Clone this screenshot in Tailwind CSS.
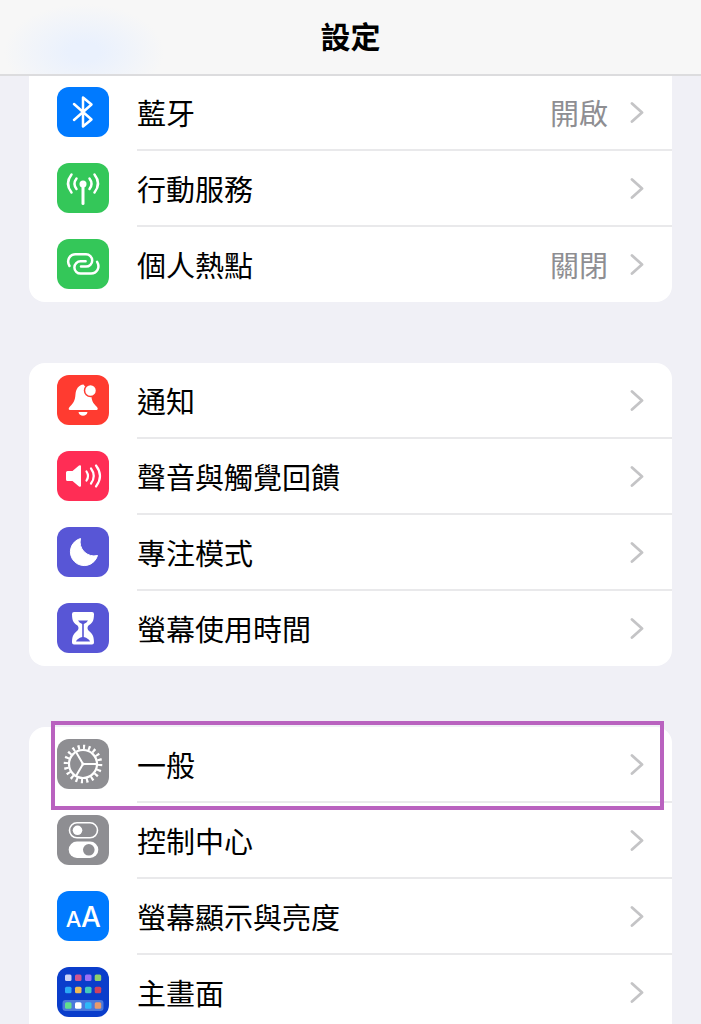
<!DOCTYPE html>
<html lang="zh-Hant">
<head>
  <meta charset="UTF-8" />
  <meta name="viewport" content="width=device-width, initial-scale=1.0" />
  <title>設定</title>
  <script src="https://cdn.jsdelivr.net/npm/@tailwindcss/browser@4"></script>
</head>
<body class="h-screen flex flex-col overflow-hidden bg-[#f0f0f6] text-black font-['Noto_Sans_CJK_TC',sans-serif]">
  <!-- Shared chevron -->
  <svg class="hidden">
    <symbol id="chevron" viewBox="0 0 14 22">
      <path d="M2 2.5L12 11.5L2 20.5" fill="none" stroke="#c4c4c6" stroke-width="2.8" stroke-linecap="round" stroke-linejoin="round" />
    </symbol>
  </svg>

  <header class="relative z-10 h-[76px] -mb-px shrink-0 flex items-center justify-center pb-1 border-b-2 border-[#dcdcde] bg-[#f7f7f7] bg-[radial-gradient(ellipse_80px_48px_at_84px_52px,#eaf1fd_20%,transparent)]">
    <h1 class="text-[30px] leading-10 font-bold">設定</h1>
  </header>

  <main class="flex-1 overflow-y-auto [scrollbar-width:none] flex flex-col gap-[61px] px-[29px]">
    <!-- Connectivity -->
    <ul class="shrink-0 bg-white rounded-b-2xl">
      <li>
        <a href="#bluetooth" class="flex items-start gap-7 pl-7">
          <svg class="w-[52px] h-[50px] mt-3 shrink-0 rounded-xl bg-[#007aff]" viewBox="0 0 52 50" fill="none" stroke="#fff" stroke-width="2.500" stroke-linejoin="round" stroke-linecap="round">
            <path d="M17 17L34.500 32.500L26 39.500V10.500L34.500 17.500L17 33" />
          </svg>
          <div class="flex-1 h-[76px] flex items-center border-b-2 border-[#e9e9eb] pr-7">
            <span class="flex-1 text-[29px] leading-10">藍牙</span>
            <span class="text-[29px] leading-10 text-[#8e8e92] mr-[22px]">開啟</span>
            <svg class="w-3.5 h-[22px]"><use href="#chevron" /></svg>
          </div>
        </a>
      </li>
      <li>
        <a href="#cellular" class="flex items-start gap-7 pl-7">
          <svg class="w-[52px] h-[50px] mt-3 shrink-0 rounded-xl bg-[#34c759]" viewBox="0 0 52 50" fill="none" stroke="#fff" stroke-width="2.500" stroke-linecap="round">
            <circle cx="26" cy="21" r="3.500" fill="#fff" stroke="none" />
            <path d="M26 22V40.500" stroke-width="3" />
            <path d="M32.500 15.500Q36.500 20.800 32.500 26M19.500 15.500Q15.500 20.800 19.500 26" />
            <path d="M37.500 11.500Q44.500 20.500 37.500 29.500M14.500 11.500Q7.500 20.500 14.500 29.500" />
          </svg>
          <div class="flex-1 h-[76px] flex items-center border-b-2 border-[#e9e9eb] pr-7">
            <span class="flex-1 text-[29px] leading-10">行動服務</span>
            <svg class="w-3.5 h-[22px]"><use href="#chevron" /></svg>
          </div>
        </a>
      </li>
      <li>
        <a href="#hotspot" class="flex items-start gap-7 pl-7">
          <svg class="w-[52px] h-[50px] mt-3 shrink-0 rounded-xl bg-[#34c759]" viewBox="0 0 52 50" fill="none" stroke="#fff" stroke-width="2.500" stroke-linecap="round">
            <path id="loop" d="M12.500 27C9 21 13 15.200 18.500 15.200H29A6.200 6.200 0 0 1 29 27.600H24" />
            <use href="#loop" transform="rotate(180 26.300 24.900)" />
          </svg>
          <div class="flex-1 h-[75px] flex items-center pr-7 pb-0.5">
            <span class="flex-1 text-[29px] leading-10">個人熱點</span>
            <span class="text-[29px] leading-10 text-[#8e8e92] mr-[22px]">關閉</span>
            <svg class="w-3.5 h-[22px]"><use href="#chevron" /></svg>
          </div>
        </a>
      </li>
    </ul>

    <!-- Alerts and focus -->
    <ul class="shrink-0 bg-white rounded-2xl">
      <li>
        <a href="#notifications" class="flex items-start gap-7 pl-7">
          <svg class="w-[52px] h-[50px] mt-3 shrink-0 rounded-xl bg-[#ff3b30]" viewBox="0 0 52 50" fill="#fff">
            <path d="M26.500 9.500C21.500 10 19 14 18.500 19C18 26 16.500 28 13 31.500C11 33.500 11.500 35 13.500 35H39C41 35 41.500 33.500 39.500 31.500C36 28 34.700 26 34.200 20Z" />
            <path d="M21.500 37H30.500C30 42 22 42 21.500 37Z" />
            <circle cx="33.500" cy="15.500" r="6" stroke="#ff3b30" stroke-width="1.500" />
          </svg>
          <div class="flex-1 h-[76px] flex items-center border-b-2 border-[#e9e9eb] pr-7">
            <span class="flex-1 text-[29px] leading-10">通知</span>
            <svg class="w-3.5 h-[22px]"><use href="#chevron" /></svg>
          </div>
        </a>
      </li>
      <li>
        <a href="#sounds" class="flex items-start gap-7 pl-7">
          <svg class="w-[52px] h-[50px] mt-3 shrink-0 rounded-xl bg-[#ff2d55]" viewBox="0 0 52 50" fill="none" stroke="#fff" stroke-width="2.200" stroke-linecap="round">
            <path d="M10.500 20H15.500L22 14.500Q24 13.500 24 15.500V34.500Q24 36.500 22 35.500L15.500 30H10.500Q9 30 9 28.500V21.500Q9 20 10.500 20Z" fill="#fff" stroke="none" />
            <path d="M29.500 20.500Q32.500 25 29.500 29.500M34 17.500Q39.500 25 34 32.500M39 14.500Q47 25 39 35.500" />
          </svg>
          <div class="flex-1 h-[76px] flex items-center border-b-2 border-[#e9e9eb] pr-7">
            <span class="flex-1 text-[29px] leading-10">聲音與觸覺回饋</span>
            <svg class="w-3.5 h-[22px]"><use href="#chevron" /></svg>
          </div>
        </a>
      </li>
      <li>
        <a href="#focus" class="flex items-start gap-7 pl-7">
          <svg class="w-[52px] h-[50px] mt-3 shrink-0 rounded-xl bg-[#5856d6]" viewBox="0 0 52 50" fill="#fff">
            <path d="M23.500 11.500A13.800 13.800 0 1 0 40.500 28.500A14 14 0 0 1 23.500 11.500Z" stroke="#fff" stroke-linejoin="round" />
          </svg>
          <div class="flex-1 h-[76px] flex items-center border-b-2 border-[#e9e9eb] pr-7">
            <span class="flex-1 text-[29px] leading-10">專注模式</span>
            <svg class="w-3.5 h-[22px]"><use href="#chevron" /></svg>
          </div>
        </a>
      </li>
      <li>
        <a href="#screen-time" class="flex items-start gap-7 pl-7">
          <svg class="w-[52px] h-[50px] mt-3 shrink-0 rounded-xl bg-[#5856d6]" viewBox="0 0 52 50">
            <path d="M17 9H35Q37 9 37 11C37 19 34.500 20.500 31.500 22.500Q29.500 25 31.500 27.500C34.500 30 37 32 37 39.500Q37 41.500 35 41.500H17Q15 41.500 15 39.500C15 32 17.500 30 20.500 27.500Q22.500 25 20.500 22.500C17.500 20.500 15 19 15 11Q15 9 17 9Z" fill="#fff" />
            <path d="M21 17.500H31Q30 19.500 26.800 21V34Q32 35.500 33 38.500H19Q20 35.500 25.200 34V21Q22 19.500 21 17.500Z" fill="#5856d6" />
          </svg>
          <div class="flex-1 h-[75px] flex items-center pr-7 pb-0.5">
            <span class="flex-1 text-[29px] leading-10">螢幕使用時間</span>
            <svg class="w-3.5 h-[22px]"><use href="#chevron" /></svg>
          </div>
        </a>
      </li>
    </ul>

    <!-- Device -->
    <ul class="shrink-0 bg-white rounded-t-2xl">
      <li class="relative">
        <a href="#general" class="flex items-start gap-7 pl-7">
          <svg class="w-[52px] h-[50px] mt-3 shrink-0 rounded-xl bg-[#8e8e92]" viewBox="0 0 52 50" fill="none" stroke="#fff">
            <circle cx="26" cy="25" r="14" stroke-width="2.200" />
            <circle cx="26" cy="25" r="17" stroke-width="4.600" pathLength="80" stroke-dasharray="1.600 2.400" />
            <path d="M26 25H40M26 25L19 12.900M26 25L19 37.100" stroke-width="2" />
            <circle cx="26" cy="25" r="1.600" fill="#fff" stroke="none" />
          </svg>
          <div class="flex-1 h-[76px] flex items-center border-b-2 border-[#e9e9eb] pr-7">
            <span class="flex-1 text-[29px] leading-10">一般</span>
            <svg class="w-3.5 h-[22px]"><use href="#chevron" /></svg>
          </div>
        </a>
        <!-- Highlight frame -->
        <div class="absolute left-[22px] right-2 -top-1.5 -bottom-[7px] border-4 border-[#b962bf] pointer-events-none"></div>
      </li>
      <li>
        <a href="#control-center" class="flex items-start gap-7 pl-7">
          <svg class="w-[52px] h-[50px] mt-3 shrink-0 rounded-xl bg-[#8e8e92]" viewBox="0 0 52 50" fill="#fff">
            <rect x="12.500" y="7.800" width="28" height="15" rx="7.500" fill="none" stroke="#fff" stroke-width="1.600" />
            <circle cx="20.500" cy="15.300" r="4.800" />
            <rect x="11.700" y="26.500" width="29.600" height="16.500" rx="8.250" />
            <circle cx="31.800" cy="34.800" r="5.800" fill="#8e8e92" />
          </svg>
          <div class="flex-1 h-[76px] flex items-center border-b-2 border-[#e9e9eb] pr-7">
            <span class="flex-1 text-[29px] leading-10">控制中心</span>
            <svg class="w-3.5 h-[22px]"><use href="#chevron" /></svg>
          </div>
        </a>
      </li>
      <li>
        <a href="#display" class="flex items-start gap-7 pl-7">
          <svg class="w-[52px] h-[50px] mt-3 shrink-0 rounded-xl bg-[#007aff] font-['Inter',sans-serif] font-medium" viewBox="0 0 52 50" fill="#fff">
            <text x="16.500" y="36" font-size="22" text-anchor="middle">A</text>
            <text x="34" y="36" font-size="28" text-anchor="middle">A</text>
          </svg>
          <div class="flex-1 h-[76px] flex items-center border-b-2 border-[#e9e9eb] pr-7">
            <span class="flex-1 text-[29px] leading-10">螢幕顯示與亮度</span>
            <svg class="w-3.5 h-[22px]"><use href="#chevron" /></svg>
          </div>
        </a>
      </li>
      <li>
        <a href="#home-screen" class="flex items-start gap-7 pl-7">
          <svg class="w-[52px] h-[50px] mt-3 shrink-0 rounded-xl bg-[#0a3dcb]" viewBox="0 0 52 50">
            <rect x="5.500" y="33" width="41" height="11" rx="3" fill="#4a78dc" />
            <rect x="8" y="7.500" width="6.500" height="6.500" rx="1.500" fill="#ccd3f5" />
            <rect x="18" y="7.500" width="6.500" height="6.500" rx="1.500" fill="#d0568f" />
            <rect x="28" y="7.500" width="6.500" height="6.500" rx="1.500" fill="#9b70f5" />
            <rect x="37.700" y="7.500" width="6.500" height="6.500" rx="1.500" fill="#8fd06b" />
            <rect x="8" y="19.700" width="6.500" height="6.500" rx="1.500" fill="#2ba9f5" />
            <rect x="18" y="19.700" width="6.500" height="6.500" rx="1.500" fill="#eebb55" />
            <rect x="28" y="19.700" width="6.500" height="6.500" rx="1.500" fill="#42cbbd" />
            <rect x="37.700" y="19.700" width="6.500" height="6.500" rx="1.500" fill="#cf4260" />
            <rect x="8" y="35.300" width="6.500" height="6.500" rx="1.500" fill="#62df8c" />
            <rect x="18" y="35.300" width="6.500" height="6.500" rx="1.500" fill="#fff" />
            <rect x="28" y="35.300" width="6.500" height="6.500" rx="1.500" fill="#2fb8f8" />
            <rect x="37.700" y="35.300" width="6.500" height="6.500" rx="1.500" fill="#e89a6c" />
          </svg>
          <div class="flex-1 h-[75px] flex items-center pr-7 pb-0.5">
            <span class="flex-1 text-[29px] leading-10">主畫面</span>
            <svg class="w-3.5 h-[22px]"><use href="#chevron" /></svg>
          </div>
        </a>
      </li>
    </ul>
  </main>
</body>
</html>
